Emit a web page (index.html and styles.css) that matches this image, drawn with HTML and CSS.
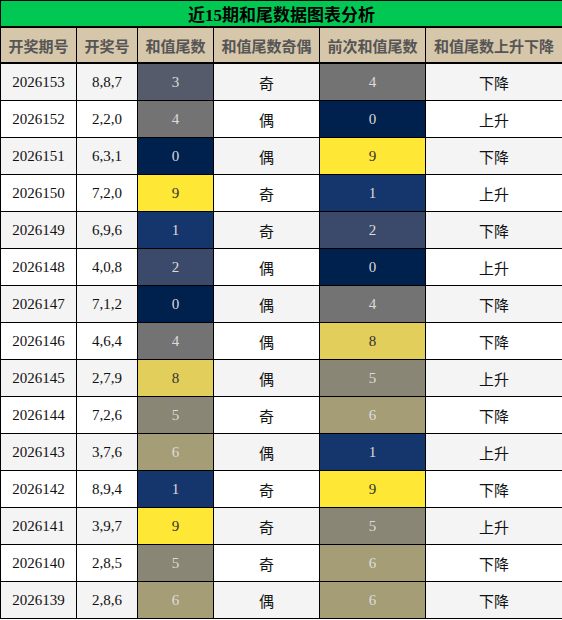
FILE: index.html
```
<!DOCTYPE html>
<html lang="zh">
<head>
    <meta charset="UTF-8">
    <meta name="viewport" content="width=device-width, initial-scale=1.0">
    <title>近15期和尾数据图表分析</title>
    <link rel="stylesheet" href="styles.css">
</head>
<body>
    <table class="tail-table">
        <colgroup>
            <col class="c-issue">
            <col class="c-nums">
            <col class="c-tail">
            <col class="c-odd">
            <col class="c-prev">
            <col class="c-trend">
        </colgroup>
        <thead>
            <tr>
                <th class="title" colspan="6">近15期和尾数据图表分析</th>
            </tr>
            <tr class="head-row">
                <th>开奖期号</th>
                <th>开奖号</th>
                <th>和值尾数</th>
                <th>和值尾数奇偶</th>
                <th>前次和值尾数</th>
                <th>和值尾数上升下降</th>
            </tr>
        </thead>
        <tbody id="rows"></tbody>
    </table>

    <script>
        // 期号, 开奖号, 和值尾数, 奇偶, 前次尾数, 升降
        const data = [
            ["2026153", "8,8,7", 3, "奇", 4, "下降"],
            ["2026152", "2,2,0", 4, "偶", 0, "上升"],
            ["2026151", "6,3,1", 0, "偶", 9, "下降"],
            ["2026150", "7,2,0", 9, "奇", 1, "上升"],
            ["2026149", "6,9,6", 1, "奇", 2, "下降"],
            ["2026148", "4,0,8", 2, "偶", 0, "上升"],
            ["2026147", "7,1,2", 0, "偶", 4, "下降"],
            ["2026146", "4,6,4", 4, "偶", 8, "下降"],
            ["2026145", "2,7,9", 8, "偶", 5, "上升"],
            ["2026144", "7,2,6", 5, "奇", 6, "下降"],
            ["2026143", "3,7,6", 6, "偶", 1, "上升"],
            ["2026142", "8,9,4", 1, "奇", 9, "下降"],
            ["2026141", "3,9,7", 9, "奇", 5, "上升"],
            ["2026140", "2,8,5", 5, "奇", 6, "下降"],
            ["2026139", "2,8,6", 6, "偶", 6, "下降"]
        ];

        const rows = document.getElementById("rows");
        data.forEach(function (d) {
            const tr = document.createElement("tr");
            tr.innerHTML =
                `<td class="num">${d[0]}</td>` +
                `<td class="num">${d[1]}</td>` +
                `<td class="num tail t${d[2]}">${d[2]}</td>` +
                `<td class="cn">${d[3]}</td>` +
                `<td class="num tail t${d[4]}">${d[4]}</td>` +
                `<td class="cn">${d[5]}</td>`;
            rows.appendChild(tr);
        });
    </script>
</body>
</html>
```

FILE: styles.css
```
body {
    margin: 0;
    background: #fff;
}

.tail-table {
    width: 562px;
    border-collapse: collapse;
    table-layout: fixed;
    font-family: "Liberation Serif", "Noto Sans CJK SC", serif;
}

.c-issue { width: 76px; }
.c-nums { width: 61px; }
.c-tail { width: 76px; }
.c-odd { width: 106px; }
.c-prev { width: 106px; }
.c-trend { width: 137px; }

.tail-table th,
.tail-table td {
    border: 1px solid #000;
    padding: 0;
    text-align: center;
}

/* Titre */
.title {
    height: 24px;
    background: #00c853;
    color: #000;
    font-family: "Liberation Serif", "Noto Sans CJK SC", serif;
    font-size: 17px;
    font-weight: bold;
    border-bottom-width: 2px !important;
}

/* En-tête des colonnes */
.head-row th {
    height: 34px;
    background: #d6c6aa;
    color: #555;
    font-family: "Noto Sans CJK SC", sans-serif;
    font-size: 15px;
    font-weight: bold;
    border-bottom-width: 2px;
}

.tail-table tbody td {
    height: 36px;
    background: #fff;
    color: #111;
}

.tail-table tbody tr:nth-child(odd) td {
    background: #f4f4f4;
}

.num {
    font-size: 15px;
}

.cn {
    font-family: "Noto Sans CJK SC", sans-serif;
    font-size: 15px;
}

/* Couleurs des trous */
.tail-table tbody td.tail {
    color: #dcdcdc;
}

.tail-table tbody tr td.tail.t0 { background: #00204e; }
.tail-table tbody tr td.tail.t1 { background: #15356d; }
.tail-table tbody tr td.tail.t2 { background: #3b4a6b; }
.tail-table tbody tr td.tail.t3 { background: #565b6b; }
.tail-table tbody tr td.tail.t4 { background: #737374; }
.tail-table tbody tr td.tail.t5 { background: #898675; }
.tail-table tbody tr td.tail.t6 { background: #a59d76; }
.tail-table tbody tr td.tail.t8 { background: #e2ce5a; color: #333; }
.tail-table tbody tr td.tail.t9 { background: #ffe835; color: #333; }
```
